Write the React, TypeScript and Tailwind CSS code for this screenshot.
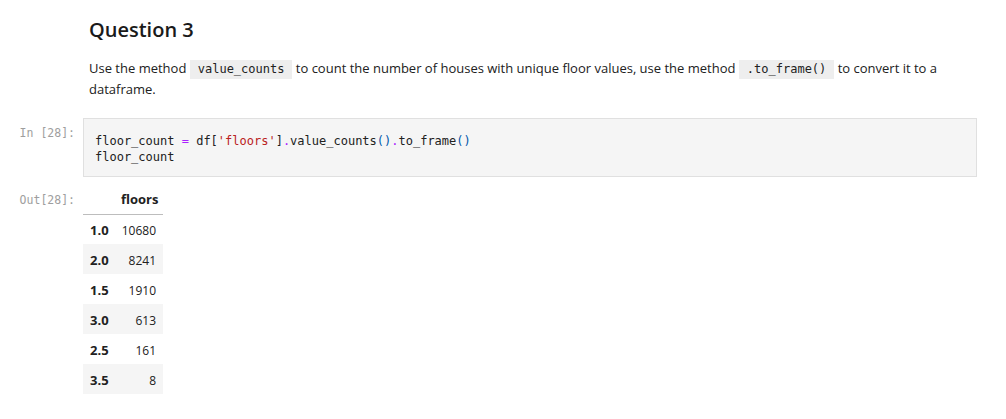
const sans = 'font-["Segoe_UI","Open_Sans","Noto_Sans",sans-serif]';
const mono = 'font-["DejaVu_Sans_Mono","Liberation_Mono",monospace]';

const rows = [
  { idx: '1.0', val: 10680 },
  { idx: '2.0', val: 8241 },
  { idx: '1.5', val: 1910 },
  { idx: '3.0', val: 613 },
  { idx: '2.5', val: 161 },
  { idx: '3.5', val: 8 },
];

function InlineCode({ children }: { children: string }) {
  return (
    <code
      className={`${mono} inline-block align-baseline text-[12px] leading-[19px] bg-[#eeeeee] px-[8px] text-[#212121]`}
    >
      {children}
    </code>
  );
}

export default function App() {
  return (
    <div className={`${sans} bg-white w-[1006px] h-[419px] text-[#212121] overflow-hidden`}>
      {/* markdown cell */}
      <div className="pl-[89px] pr-[29px] pt-[17px]">
        <h2 className="text-[20px] leading-[26px] font-semibold text-[#1a1a1a]">Question 3</h2>
        <p className="mt-[15px] text-[13px] leading-[21px]">
          <span>Use the method </span>
          <InlineCode>value_counts</InlineCode>
          <span> to count the number of houses with unique floor values, use the method </span>
          <InlineCode>.to_frame()</InlineCode>
          <span> to convert it to a</span>
          <br />
          <span>dataframe.</span>
        </p>
      </div>

      {/* code cell */}
      <div className="flex mt-[18px]">
        <div className={`${mono} w-[83px] shrink-0 text-right pr-[8px] pt-[7px] text-[11.5px] text-[#9e9e9e]`}>
          In&nbsp;[28]:
        </div>
        <div
          className={`${mono} w-[894px] bg-[#f5f5f5] border border-[#e0e0e0] pl-[11px] pt-[14px] pb-[11px] text-[12px] leading-[16px] text-[#212121] whitespace-pre`}
        >
          <div>
            floor_count <span className="text-[#aa22ff]">=</span> df[<span className="text-[#ba2121]">'floors'</span>]
            <span className="text-[#aa22ff]">.</span>value_counts<span className="text-[#0055aa]">()</span>
            <span className="text-[#aa22ff]">.</span>to_frame<span className="text-[#0055aa]">()</span>
          </div>
          <div>floor_count</div>
        </div>
      </div>

      {/* output */}
      <div className="flex mt-[9px]">
        <div className={`${mono} w-[83px] shrink-0 text-right pr-[8px] pt-[6px] text-[11.5px] text-[#9e9e9e]`}>
          Out[28]:
        </div>
        <table className="w-[80px] text-[12px] border-collapse table-fixed">
          <thead>
            <tr className="border-b border-[#bdbdbd]">
              <th className="w-[31px] h-[28px]"></th>
              <th className="text-right font-bold px-[7px] h-[28px] text-[13px]">floors</th>
            </tr>
          </thead>
          <tbody>
            {rows.map((r, i) => (
              <tr key={r.idx} className={i % 2 === 1 ? 'bg-[#f5f5f5]' : ''}>
                <th className="h-[30px] pl-[7px] pr-0 pt-[3px] text-left font-bold text-[13px]">{r.idx}</th>
                <td className="h-[30px] pl-0 pr-[7px] pt-[3px] text-right">{r.val}</td>
              </tr>
            ))}
          </tbody>
        </table>
      </div>
    </div>
  );
}
